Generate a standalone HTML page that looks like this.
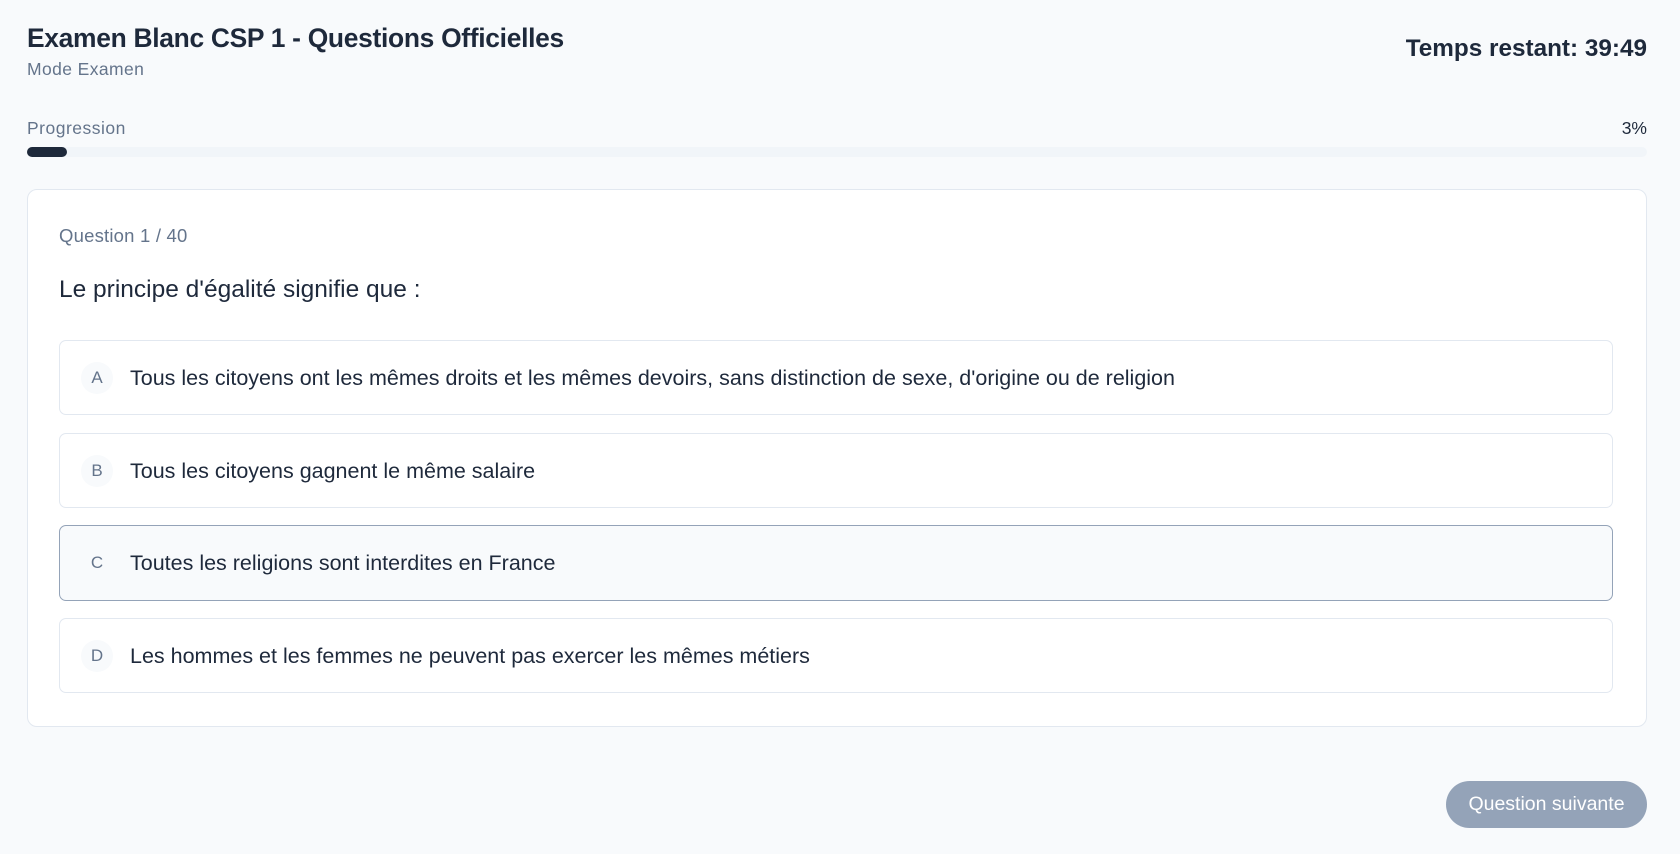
<!DOCTYPE html>
<html><head><meta charset="utf-8"><style>
*{box-sizing:border-box;margin:0;padding:0}
body{width:1680px;height:854px;background:#f8fafc;font-family:"Liberation Sans",Arial,sans-serif;color:#1e293b;position:relative;overflow:hidden}
.abs{position:absolute;white-space:nowrap}
.title{left:27px;top:23px;font-size:26.4px;font-weight:bold;letter-spacing:-0.3px}
.sub{left:27px;top:59px;font-size:17.5px;letter-spacing:0.4px;color:#64748b}
.timer{right:33px;top:35px;font-size:24.3px;font-weight:bold}
.prog{left:27px;top:118px;font-size:17.5px;letter-spacing:0.5px;color:#64748b}
.pct{right:33px;top:118px;font-size:17.5px;color:#1e293b}
.bar{left:27px;top:147px;width:1620px;height:10px;background:#f1f5f9;border-radius:5px}
.fill{left:27px;top:147px;width:40px;height:10px;background:#1e293b;border-radius:5px}
.card{left:27px;top:189px;width:1620px;height:538px;background:#fff;border:1px solid #e2e8f0;border-radius:10px}
.ql{left:59px;top:225px;font-size:18.5px;letter-spacing:0.2px;color:#64748b}
.qt{left:59px;top:276px;font-size:24.5px}
.opt{left:59px;width:1554px;height:75px;background:#fff;border:1px solid #e2e8f0;border-radius:7px}
.opt.sel{background:#f8fafc;border-color:#94a3b8}
.l{position:absolute;left:21px;top:21px;width:32px;height:32px;border-radius:50%;background:#f8fafc;color:#64748b;font-size:17px;text-align:center;line-height:32px}
.sel .l{background:transparent}
.t{position:absolute;left:70px;top:25px;font-size:21.5px;color:#1e293b}
.btn{left:1446px;top:781px;width:201px;height:47px;border-radius:24px;background:#94a3b8;color:#fff;font-size:19.5px;text-align:center;line-height:47px}
</style></head><body>
<div class="abs title">Examen Blanc CSP 1 - Questions Officielles</div>
<div class="abs sub">Mode Examen</div>
<div class="abs timer">Temps restant: 39:49</div>
<div class="abs prog">Progression</div>
<div class="abs pct">3%</div>
<div class="abs bar"></div>
<div class="abs fill"></div>
<div class="abs card"></div>
<div class="abs ql">Question 1 / 40</div>
<div class="abs qt">Le principe d'égalité signifie que :</div>
<div class="abs opt" style="top:340px"><span class="l">A</span><span class="t">Tous les citoyens ont les mêmes droits et les mêmes devoirs, sans distinction de sexe, d'origine ou de religion</span></div>
<div class="abs opt" style="top:433px"><span class="l">B</span><span class="t">Tous les citoyens gagnent le même salaire</span></div>
<div class="abs opt sel" style="top:525px;height:76px"><span class="l">C</span><span class="t">Toutes les religions sont interdites en France</span></div>
<div class="abs opt" style="top:618px"><span class="l">D</span><span class="t">Les hommes et les femmes ne peuvent pas exercer les mêmes métiers</span></div>
<div class="abs btn">Question suivante</div>
</body></html>
